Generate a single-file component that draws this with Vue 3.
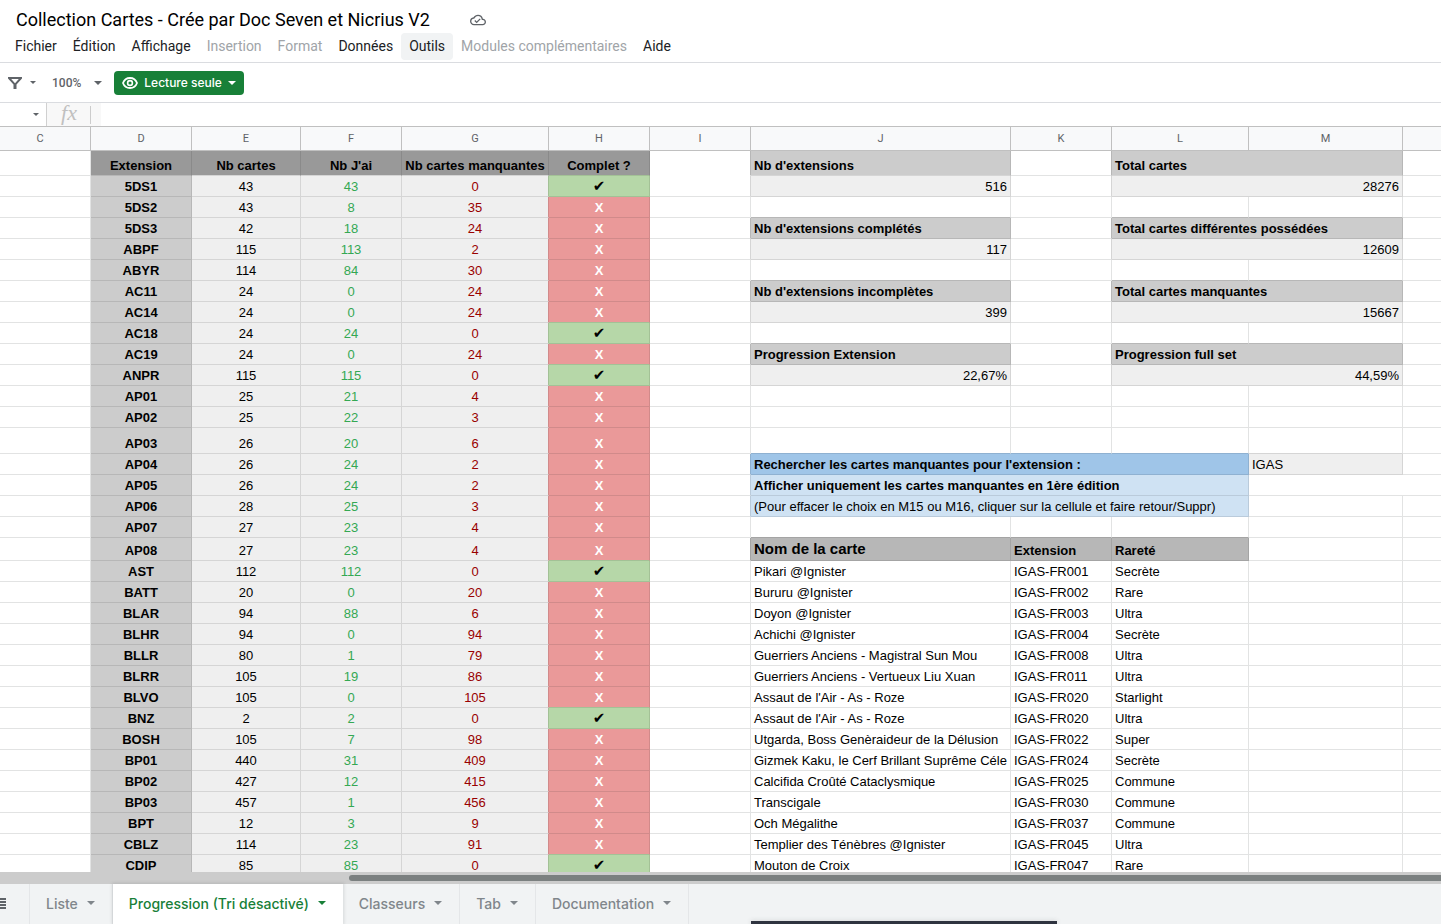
<script setup>
const menus = [
  { label: 'Fichier' },
  { label: 'Édition' },
  { label: 'Affichage' },
  { label: 'Insertion', disabled: true },
  { label: 'Format', disabled: true },
  { label: 'Données' },
  { label: 'Outils', active: true },
  { label: 'Modules complémentaires', disabled: true },
  { label: 'Aide' },
]

const columns = ['C', 'D', 'E', 'F', 'G', 'H', 'I', 'J', 'K', 'L', 'M', '']

const tabs = [
  { label: 'Liste' },
  { label: 'Progression (Tri désactivé)', active: true },
  { label: 'Classeurs' },
  { label: 'Tab' },
  { label: 'Documentation' },
]

const progress = [
  ['5DS1', 43, 43, 0], ['5DS2', 43, 8, 35], ['5DS3', 42, 18, 24], ['ABPF', 115, 113, 2],
  ['ABYR', 114, 84, 30], ['AC11', 24, 0, 24], ['AC14', 24, 0, 24], ['AC18', 24, 24, 0],
  ['AC19', 24, 0, 24], ['ANPR', 115, 115, 0], ['AP01', 25, 21, 4], ['AP02', 25, 22, 3],
  ['AP03', 26, 20, 6], ['AP04', 26, 24, 2], ['AP05', 26, 24, 2], ['AP06', 28, 25, 3],
  ['AP07', 27, 23, 4], ['AP08', 27, 23, 4], ['AST', 112, 112, 0], ['BATT', 20, 0, 20],
  ['BLAR', 94, 88, 6], ['BLHR', 94, 0, 94], ['BLLR', 80, 1, 79], ['BLRR', 105, 19, 86],
  ['BLVO', 105, 0, 105], ['BNZ', 2, 2, 0], ['BOSH', 105, 7, 98], ['BP01', 440, 31, 409],
  ['BP02', 427, 12, 415], ['BP03', 457, 1, 456], ['BPT', 12, 3, 9], ['CBLZ', 114, 23, 91],
  ['CDIP', 85, 85, 0],
]

const totals = [
  ["Nb d'extensions", '516', 'Total cartes', '28276'],
  ["Nb d'extensions complétés", '117', 'Total cartes différentes possédées', '12609'],
  ["Nb d'extensions incomplètes", '399', 'Total cartes manquantes', '15667'],
  ['Progression Extension', '22,67%', 'Progression full set', '44,59%'],
]

const cards = [
  ['Pikari @Ignister', '001', 'Secrète'],
  ['Bururu @Ignister', '002', 'Rare'],
  ['Doyon @Ignister', '003', 'Ultra'],
  ['Achichi @Ignister', '004', 'Secrète'],
  ['Guerriers Anciens - Magistral Sun Mou', '008', 'Ultra'],
  ['Guerriers Anciens - Vertueux Liu Xuan', '011', 'Ultra'],
  ["Assaut de l'Air - As - Roze", '020', 'Starlight'],
  ["Assaut de l'Air - As - Roze", '020', 'Ultra'],
  ['Utgarda, Boss Genèraideur de la Délusion', '022', 'Super'],
  ['Gizmek Kaku, le Cerf Brillant Suprême Céle', '024', 'Secrète'],
  ['Calcifida Croûté Cataclysmique', '025', 'Commune'],
  ['Transcigale', '030', 'Commune'],
  ['Och Mégalithe', '037', 'Commune'],
  ['Templier des Ténèbres @Ignister', '045', 'Ultra'],
  ['Mouton de Croix', '047', 'Rare'],
]

const cell = (text = '', fill = 'white', look = '', span = 1) => ({ text, fill, look, span })

function leftCells(index) {
  if (index === 0) {
    return ['Extension', 'Nb cartes', "Nb J'ai", 'Nb cartes manquantes', 'Complet ?']
      .map((t) => cell(t, 'dark', 'center bold'))
  }
  const [code, count, owned, missing] = progress[index - 1]
  return [
    cell(code, 'grey', 'center bold'),
    cell(count, 'light', 'center'),
    cell(owned, 'light', 'center owned'),
    cell(missing, 'light', 'center missing'),
    missing ? cell('X', 'red', 'center bold cross') : cell('✔', 'green', 'center tick'),
  ]
}

function rightCells(index) {
  if (index < 11) {
    const block = totals[Math.floor(index / 3)]
    if (block && index % 3 === 0) {
      return [cell(block[0], 'grey', 'bold'), cell(), cell(block[2], 'grey', 'bold', 2), cell()]
    }
    if (block && index % 3 === 1) {
      return [cell(block[1], 'light', 'right'), cell(), cell(block[3], 'light', 'right', 2), cell()]
    }
  }
  if (index === 14) {
    return [cell("Rechercher les cartes manquantes pour l'extension :", 'blue', 'bold', 3), cell('IGAS', 'light'), cell()]
  }
  if (index === 15) {
    return [cell('Afficher uniquement les cartes manquantes en 1ère édition', 'sky', 'bold', 3), cell('', 'white', '', 2)]
  }
  if (index === 16) {
    return [cell('(Pour effacer le choix en M15 ou M16, cliquer sur la cellule et faire retour/Suppr)', 'sky', '', 3), cell(), cell()]
  }
  if (index === 18) {
    return [cell('Nom de la carte', 'mid', 'bold large'), cell('Extension', 'mid', 'bold'), cell('Rareté', 'mid', 'bold'), cell(), cell()]
  }
  const card = index > 18 && cards[index - 19]
  if (card) {
    return [cell(card[0]), cell('IGAS-FR' + card[1]), cell(card[2]), cell(), cell()]
  }
  return [cell(), cell(), cell(), cell(), cell()]
}

const raw = Array.from({ length: progress.length + 1 }, (_, i) => [
  cell(), ...leftCells(i), cell('', 'white', i === 0 ? 'open' : ''), ...rightCells(i),
])

// A shared edge takes the stronger of the two fills it separates.
const strength = ['white', 'light', 'sky', 'blue', 'grey', 'mid', 'red', 'green', 'dark']
const stronger = (a, b) => (strength.indexOf(a) >= strength.indexOf(b) ? a : b)

function fillAt(row, column) {
  let at = 0
  for (const c of row) {
    at += c.span
    if (column < at) return c.fill
  }
  return 'white'
}

const rows = raw.map((row, r) => {
  let at = 0
  const below = raw[r + 1] || row
  return row.map((c, i) => {
    const under = fillAt(below, at)
    at += c.span
    const side = i === 0 ? 'white' : fillAt(row, at)
    const bottom = r === 0 ? under : stronger(c.fill, under)
    return { ...c, classes: [c.look, 'fill-' + c.fill, 'right-' + stronger(c.fill, side), 'bottom-' + bottom] }
  })
})

const rowClass = (i) => ({ 0: 'first', 13: 'tall', 18: 'medium' })[i] || ''
</script>

<template>
  <div class="app">
    <header class="top">
      <div class="title-row">
        <h1>Collection Cartes - Crée par Doc Seven et Nicrius V2</h1>
        <svg class="cloud" viewBox="0 0 24 24" aria-hidden="true">
          <path d="M19.35 10.04A7.49 7.49 0 0 0 12 4C9.11 4 6.6 5.64 5.35 8.04A5.994 5.994 0 0 0 0 14c0 3.31 2.69 6 6 6h13c2.76 0 5-2.24 5-5 0-2.64-2.05-4.78-4.65-4.96zM19 18H6c-2.21 0-4-1.79-4-4 0-2.05 1.53-3.76 3.56-3.97l1.07-.11.5-.95A5.469 5.469 0 0 1 12 6c2.62 0 4.88 1.86 5.39 4.43l.3 1.5 1.53.11A2.98 2.98 0 0 1 22 15c0 1.65-1.35 3-3 3zm-9-3.82-2.09-2.09L6.5 13.5 10 17l6.01-6.01-1.41-1.41z" />
        </svg>
      </div>
      <nav class="menus">
        <button v-for="m in menus" :key="m.label" type="button" :disabled="m.disabled" :class="{ active: m.active }">{{ m.label }}</button>
      </nav>
    </header>

    <div class="toolbar">
      <button type="button" class="filter" aria-label="Filtrer">
        <svg class="funnel" viewBox="0 0 14 12" aria-hidden="true">
          <path d="M0 0h14v1.500L8.500 7.500V12h-3V7.500L0 1.500zM3.200 2 7 6.200 10.800 2z" fill-rule="evenodd" />
        </svg>
        <span class="caret small"></span>
      </button>
      <button type="button" class="zoom">100%<span class="caret"></span></button>
      <button type="button" class="readonly">
        <svg class="eye" viewBox="0 0 16 12" aria-hidden="true">
          <path d="M8 1C4.700 1 2.100 3 1 6c1.100 3 3.700 5 7 5s5.900-2 7-5c-1.100-3-3.700-5-7-5z" fill="none" stroke="currentColor" stroke-width="1.800" />
          <circle cx="8" cy="6" r="2.400" fill="none" stroke="currentColor" stroke-width="1.600" />
        </svg>
        Lecture seule
        <span class="caret"></span>
      </button>
    </div>

    <div class="formula">
      <button type="button" class="name-box" aria-label="Zone de nom"><span class="caret small"></span></button>
      <label class="fx" for="formula-input">fx</label>
      <input id="formula-input" type="text" readonly />
    </div>

    <main class="sheet">
      <table>
        <colgroup>
          <col v-for="(c, i) in columns" :key="i" :class="'col-' + (c || 'n').toLowerCase()" />
        </colgroup>
        <thead>
          <tr>
            <th v-for="(c, i) in columns" :key="i" scope="col">{{ c }}</th>
          </tr>
        </thead>
        <tbody>
          <tr v-for="(row, r) in rows" :key="r" :class="rowClass(r)">
            <td v-for="(c, i) in row" :key="i" :colspan="c.span" :class="c.classes">{{ c.text }}</td>
          </tr>
        </tbody>
      </table>
    </main>

    <div class="scrollbar"><div class="thumb"></div></div>

    <footer class="tabs">
      <button type="button" class="all-sheets" aria-label="Toutes les feuilles">
        <svg viewBox="0 0 6 12" aria-hidden="true"><path d="M0 0h6v2H0zM0 3h6v2H0zM0 6h6v2H0zM0 9h6v2H0z" /></svg>
      </button>
      <button v-for="t in tabs" :key="t.label" type="button" class="tab" :class="{ active: t.active }">
        {{ t.label }}<span class="caret"></span>
      </button>
      <div class="toast"></div>
    </footer>
  </div>
</template>

<style>
body {
  margin: 0;
  overflow: hidden;
}
</style>

<style scoped>
.app {
  display: flex;
  flex-direction: column;
  height: 100vh;
  background: #fff;
  color: #000;
  font-family: Roboto, "Liberation Sans", sans-serif;
}
button {
  border: 0;
  padding: 0;
  background: none;
  font: inherit;
  color: inherit;
  white-space: nowrap;
}
.caret {
  flex: none;
  border: 4px solid transparent;
  border-top-color: currentColor;
  border-bottom: 0;
}
.caret.small {
  border-width: 3px;
  border-bottom: 0;
}
.top {
  border-bottom: 1px solid #dadce0;
  padding: 8px 7px 2px;
}
.title-row {
  display: flex;
  align-items: center;
  gap: 40px;
  height: 24px;
  padding-left: 9px;
}
h1 {
  margin: 0;
  font-size: 18px;
  line-height: 24px;
  font-weight: 400;
}
.cloud {
  width: 16px;
  height: 16px;
  fill: #5f6368;
}
.menus {
  display: flex;
  margin-top: 1px;
}
.menus button {
  height: 27px;
  padding: 0 8px 2px;
  border-radius: 4px;
  font-size: 14px;
  color: #202124;
}
.menus button:disabled {
  color: #a0a4a8;
}
.menus .active {
  background: #f1f3f4;
}
.toolbar {
  display: flex;
  align-items: center;
  height: 39px;
  padding-left: 8px;
  border-bottom: 1px solid #dadce0;
  color: #5f6368;
}
.filter {
  display: flex;
  align-items: center;
  gap: 8px;
  margin-right: 16px;
}
.funnel {
  width: 14px;
  height: 12px;
  fill: currentColor;
}
.zoom {
  display: flex;
  align-items: center;
  gap: 13px;
  margin-right: 12px;
  font-size: 12px;
  font-weight: 500;
}
.readonly {
  display: flex;
  align-items: center;
  gap: 6px;
  height: 24px;
  padding: 0 8px;
  border-radius: 4px;
  background: #188038;
  color: #fff;
  font-family: Inter, sans-serif;
  font-size: 12px;
  font-weight: 500;
}
.eye {
  width: 16px;
  height: 12px;
}
.formula {
  display: flex;
  align-items: center;
  height: 23px;
  border-bottom: 1px solid #c0c0c0;
}
.name-box {
  display: flex;
  justify-content: flex-end;
  width: 46px;
  padding: 7px 7px;
  box-sizing: border-box;
  color: #5f6368;
}
.fx {
  width: 55px;
  height: 23px;
  box-sizing: border-box;
  padding-right: 10px;
  border-left: 1px solid #d0d0d0;
  background: linear-gradient(#ccc, #ccc) 43px 3px / 1px 18px no-repeat #f8f8f8;
  font: italic 22px/20px "Liberation Serif", serif;
  text-align: center;
  color: #c0c0c0;
}
.formula input {
  flex: 1;
  min-width: 0;
  height: 20px;
  box-sizing: border-box;
  border: 0;
  outline: 0;
}
.sheet {
  flex: 1;
  min-height: 0;
  overflow: hidden;
}
table {
  width: 100%;
  table-layout: fixed;
  border-collapse: separate;
  border-spacing: 0;
  font: 13px/18px "Liberation Sans", Arial, sans-serif;
}
.col-c { width: 91px; }
.col-d, .col-f, .col-h, .col-i, .col-k { width: 101px; }
.col-e { width: 109px; }
.col-g { width: 147px; }
.col-j { width: 260px; }
.col-l { width: 137px; }
.col-m { width: 154px; }
th {
  height: 24px;
  box-sizing: border-box;
  padding: 0;
  border-right: 1px solid #c0c0c0;
  border-bottom: 1px solid #c0c0c0;
  background: #f8f9fa;
  color: #5f6368;
  font: 400 11px/20px Roboto, sans-serif;
}
th:first-child {
  padding-right: 10px;
}
td {
  height: 21px;
  box-sizing: border-box;
  padding: 2px 3px 0;
  border-right: 1px solid #e2e3e3;
  border-bottom: 1px solid #e2e3e3;
  vertical-align: bottom;
  white-space: nowrap;
  overflow: hidden;
}
th:last-child,
td:last-child {
  border-right: 0;
}
.first td { height: 25px; }
.tall td { height: 26px; }
.medium td { height: 23px; }
td.center { padding: 2px 0 0; text-align: center; }
td.right { text-align: right; }
.bold { font-weight: 700; }
td.large { padding: 1px 3px; font-size: 15px; line-height: 20px; }
.owned { color: #34a853; }
.missing { color: #990000; }
.cross { color: #fff; }
td.tick { padding: 1px 0; font-family: "DejaVu Sans", sans-serif; font-size: 15px; }

.fill-light { background: #efefef; }
.fill-grey { background: #ccc; }
.fill-mid { background: #b7b7b7; }
.fill-dark { background: #999; }
.fill-green { background: #b6d7a8; }
.fill-red { background: #ea9999; }
.fill-blue { background: #9fc5e8; }
.fill-sky { background: #cfe2f3; }

.right-light { border-right-color: #d5d5d5; }
.right-grey { border-right-color: #b7b7b7; }
.right-mid { border-right-color: #a4a4a4; }
.right-dark { border-right-color: #8a8a8a; }
.right-green { border-right-color: #a3c196; }
.right-red { border-right-color: #d18a8a; }
.right-blue { border-right-color: #8fb1d1; }
.right-sky { border-right-color: #bacbdb; }

.bottom-light { border-bottom-color: #d5d5d5; }
.bottom-grey { border-bottom-color: #b7b7b7; }
.bottom-mid { border-bottom-color: #a4a4a4; }
.bottom-dark { border-bottom-color: #8a8a8a; }
.bottom-green { border-bottom-color: #a3c196; }
.bottom-red { border-bottom-color: #d18a8a; }
.bottom-blue { border-bottom-color: #8fb1d1; }
.bottom-sky { border-bottom-color: #bacbdb; }

td.open {
  border-right-color: #b7b7b7;
  border-bottom-color: #fff;
}
.scrollbar {
  height: 12px;
  box-sizing: border-box;
  padding: 3px 0 3px 349px;
  background: #ccc;
}
.thumb {
  height: 6px;
  border-radius: 3px 0 0 3px;
  background: #7b8080;
}
.tabs {
  position: relative;
  display: flex;
  height: 40px;
  background: #f1f3f4;
  color: #80868b;
  font-family: Inter, sans-serif;
  font-size: 14px;
  font-weight: 500;
}
.all-sheets {
  display: flex;
  align-items: center;
  width: 30px;
  box-sizing: border-box;
  border-right: 1px solid #e4e6e8;
}
.all-sheets svg {
  width: 6px;
  height: 12px;
  fill: #5f6368;
}
.tab {
  display: flex;
  align-items: center;
  gap: 9px;
  padding: 0 17px 2px 16px;
  border-right: 1px solid #e4e6e8;
}
.tab.active {
  border-right: 0;
  background: #fff;
  color: #188038;
  box-shadow: 0 0 3px 1px rgba(60, 64, 67, 0.15);
}
.toast {
  position: absolute;
  left: 751px;
  bottom: 0;
  width: 306px;
  height: 3px;
  background: #2f3440;
  box-shadow: 0 0 5px rgba(60, 64, 67, 0.2);
}
</style>
